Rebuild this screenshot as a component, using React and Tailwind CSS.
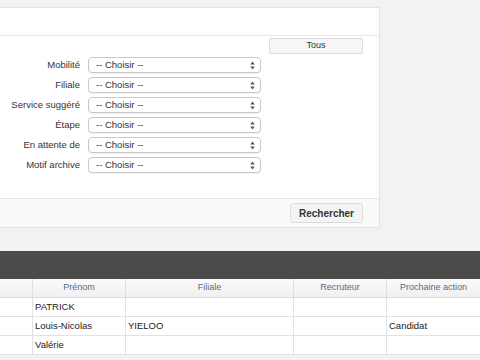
const font = { fontFamily: '"Liberation Sans", Arial, sans-serif' };

const filters = ["Mobilité", "Filiale", "Service suggéré", "Étape", "En attente de", "Motif archive"];

const rows = [
  ["", "PATRICK", "", "", ""],
  ["", "Louis-Nicolas", "YIELOO", "", "Candidat"],
  ["", "Valérie", "", "", ""],
];

const cols = ["w-[33px]", "w-[93px]", "w-[168px]", "w-[93px]", "w-[94px]"];

function Arrows() {
  return (
    <svg width="5" height="9" viewBox="0 0 5 9" className="shrink-0">
      <path d="M2.5 0.5 L4.8 3.6 L0.2 3.6 Z" fill="#555" />
      <path d="M2.5 8.5 L4.8 5.4 L0.2 5.4 Z" fill="#555" />
    </svg>
  );
}

function SelectBox() {
  return (
    <div className="w-[173px] h-[16px] ml-[8px] flex items-center justify-between pl-[7px] pr-[5px] bg-white border border-[#c8c8c8] rounded-[4px] shadow-[0_1px_1px_rgba(0,0,0,0.06)] text-[9.5px] text-[#333]">
      <span>-- Choisir --</span>
      <Arrows />
    </div>
  );
}

export default function App() {
  return (
    <div className="w-[480px] h-[360px] overflow-hidden bg-[#f2f2f4] text-[#333]" style={font}>
      <div className="pt-[7px]">
        <div className="w-[380px] bg-white border-t border-r border-b border-[#e2e2e4]">
          <div className="h-[28px] border-b border-[#e6e6e8]"></div>
          <div className="h-[162px] flex">
            <div className="pt-[21px] flex flex-col gap-[4px]">
              {filters.map((f) => (
                <div key={f} className="flex items-center h-[16px]">
                  <div className="w-[80px] text-right text-[9.5px] leading-[16px] text-[#333] whitespace-nowrap">{f}</div>
                  <SelectBox />
                </div>
              ))}
            </div>
            <div className="pt-[2px] ml-[8px]">
              <div className="w-[94px] h-[16px] flex items-center justify-center bg-[#f6f6f6] border border-[#dcdcdc] rounded-[2px] text-[9px] text-[#333]">
                Tous
              </div>
            </div>
          </div>
          <div className="h-[29px] bg-[#fafafa] border-t border-[#e6e6e8] flex justify-end pt-[4px] pr-[16px]">
            <div className="w-[73px] h-[20px] flex items-center justify-center bg-[#f4f4f4] border border-[#dcdcdc] rounded-[3px] text-[10px] font-bold text-[#333]">
              Rechercher
            </div>
          </div>
        </div>
      </div>
      <div className="mt-[23px] h-[28px] bg-[#4b4b4b]"></div>
      <div className="w-[480px]">
        <div className="flex h-[19px] bg-gradient-to-b from-[#fafafa] to-[#f0f0f0] border-b border-[#dcdcdc]">
          {["", "Prénom", "Filiale", "Recruteur", "Prochaine action"].map((h, i) => (
            <div key={i} className={`${cols[i]} shrink-0 border-r border-[#dedede] flex items-center justify-center text-[9px] text-[#4d6e8e] whitespace-nowrap`}>
              {h}
            </div>
          ))}
        </div>
        {rows.map((r, ri) => (
          <div key={ri} className="flex h-[19px] bg-white border-b border-[#e2e2e2]">
            {r.map((c, i) => (
              <div key={i} className={`${cols[i]} shrink-0 border-r border-[#e2e2e2] flex items-center pl-[2px] text-[9.5px] text-[#222] whitespace-nowrap`}>
                {c}
              </div>
            ))}
          </div>
        ))}
      </div>
    </div>
  );
}
